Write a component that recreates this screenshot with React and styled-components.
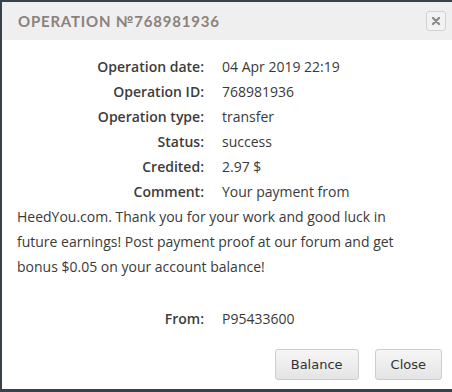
import styled, { createGlobalStyle } from "styled-components";

// Global reset
const Global = createGlobalStyle`
html, body {
  margin : 0;
  padding : 0;
  background : #36424c;
}
`

const Frame = styled.div`
width : 450px;
height : 387px;
margin : 2px 0 0 2px;
background : #ffffff;
display : flex;
flex-direction : column;
`

const TitleBar = styled.div`
height : 38px;
background : #efefef;
display : flex;
align-items : center;
justify-content : space-between;
padding : 0 6px 0 16px;
`

const Title = styled.h2`
margin : 0;
font-family : Lato, sans-serif;
font-weight : bold;
font-size : 15px;
letter-spacing : 0.8px;
color : #8c827b;
text-transform : uppercase;
`

const CloseX = styled.button`
width : 20px;
height : 20px;
padding : 0;
border : 1px solid #d2d2d2;
border-radius : 3px;
background : #f2f2f2;
display : flex;
align-items : center;
justify-content : center;
`

const Body = styled.div`
flex : 1;
padding : 14px 30px 0 15px;
font-family : "Open Sans", sans-serif;
font-size : 14px;
line-height : 25px;
color : #3a3a3a;
`

const Row = styled.div`
margin-top : ${p => (p.$gap ? "27px" : "0")};
`

const Label = styled.span`
display : inline-block;
width : 187px;
text-align : right;
margin-right : 18px;
font-weight : 600;
color : #3c3c3c;
`

const Footer = styled.div`
display : flex;
justify-content : flex-end;
gap : 16px;
padding : 0 10px 9px 0;
`

const Button = styled.button`
height : 31px;
padding : 0 ${p => p.$pad || 15}px;
border : 1px solid #cdcdcd;
border-radius : 3px;
background : linear-gradient(#f6f6f6, #e4e4e4);
font-family : "DejaVu Sans", sans-serif;
font-size : 13px;
color : #333;
`

const rows = [
  ["Operation date:", "04 Apr 2019 22:19"],
  ["Operation ID:", "768981936"],
  ["Operation type:", "transfer"],
  ["Status:", "success"],
  ["Credited:", "2.97 $"],
  ["Comment:", "Your payment from HeedYou.com. Thank you for your work and good luck in future earnings! Post payment proof at our forum and get bonus $0.05 on your account balance!"],
]

export default function App() {
  return (
    <>
      <Global />
      <Frame>
        <TitleBar>
          <Title>Operation №768981936</Title>
          <CloseX>
            <svg width="10" height="10" viewBox="0 0 10 10">
              <path d="M2 2 L8 8 M8 2 L2 8" stroke="#8a8a8a" strokeWidth="2.4" strokeLinecap="round" />
            </svg>
          </CloseX>
        </TitleBar>
        <Body>
          {rows.map(([l, v]) => (
            <Row key={l}>
              <Label>{l}</Label>
              {v}
            </Row>
          ))}
          <Row $gap>
            <Label>From:</Label>
            P95433600
          </Row>
        </Body>
        <Footer>
          <Button>Balance</Button>
          <Button $pad={15}>Close</Button>
        </Footer>
      </Frame>
    </>
  )
}
